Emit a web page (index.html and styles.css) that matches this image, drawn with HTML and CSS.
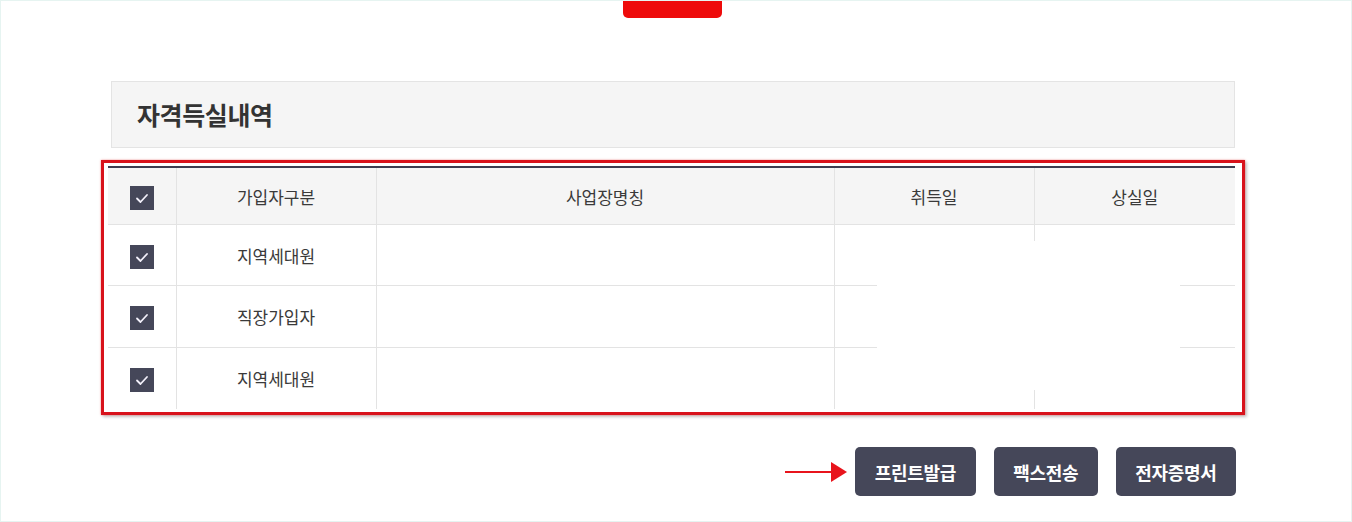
FILE: index.html
```html
<!DOCTYPE html>
<html lang="ko">
<head>
<meta charset="utf-8">
<title>자격득실내역</title>
<link rel="stylesheet" href="styles.css">
</head>
<body>
<div class="frame">
  <div class="tab"></div>
  <div class="content">
    <div class="title-box"><h2 class="title">자격득실내역</h2></div>
    <div class="highlight">
      <table class="grid">
        <colgroup>
          <col class="c-chk"><col class="c-type"><col class="c-name"><col class="c-date"><col class="c-date2">
        </colgroup>
        <thead>
          <tr>
            <th><span class="chk"><svg viewBox="0 0 24 24" width="24" height="24"><polyline points="7,12.5 10.5,16 17,9" fill="none" stroke="#f2f0fa" stroke-width="1.8" stroke-linecap="round" stroke-linejoin="round"/></svg></span></th>
            <th>가입자구분</th>
            <th>사업장명칭</th>
            <th>취득일</th>
            <th>상실일</th>
          </tr>
        </thead>
        <tbody>
          <tr>
            <td><span class="chk"><svg viewBox="0 0 24 24" width="24" height="24"><polyline points="7,12.5 10.5,16 17,9" fill="none" stroke="#f2f0fa" stroke-width="1.8" stroke-linecap="round" stroke-linejoin="round"/></svg></span></td>
            <td>지역세대원</td><td></td><td></td><td></td>
          </tr>
          <tr>
            <td><span class="chk"><svg viewBox="0 0 24 24" width="24" height="24"><polyline points="7,12.5 10.5,16 17,9" fill="none" stroke="#f2f0fa" stroke-width="1.8" stroke-linecap="round" stroke-linejoin="round"/></svg></span></td>
            <td>직장가입자</td><td></td><td></td><td></td>
          </tr>
          <tr>
            <td><span class="chk"><svg viewBox="0 0 24 24" width="24" height="24"><polyline points="7,12.5 10.5,16 17,9" fill="none" stroke="#f2f0fa" stroke-width="1.8" stroke-linecap="round" stroke-linejoin="round"/></svg></span></td>
            <td>지역세대원</td><td></td><td></td><td></td>
          </tr>
        </tbody>
      </table>
      <div class="mask"></div>
    </div>
    <div class="actions">
      <svg class="arrow" viewBox="0 0 64 24" width="64" height="24"><line x1="0" y1="12" x2="50" y2="12" stroke="#e8141c" stroke-width="2.2"/><polygon points="46,2 62,12 46,22" fill="#e8141c"/></svg>
      <button class="btn">프린트발급</button>
      <button class="btn">팩스전송</button>
      <button class="btn">전자증명서</button>
    </div>
  </div>
</div>
</body>
</html>
```

FILE: styles.css
```css
html, body {
  margin: 0;
  padding: 0;
  background: #ffffff;
}
body {
  font-family: "Noto Sans CJK KR", "Noto Sans", sans-serif;
  color: #333;
}
.frame {
  width: 1352px;
  height: 522px;
  box-sizing: border-box;
  border: 1px solid #e6f4f1;
  overflow: hidden;
}
.tab {
  width: 99px;
  height: 18px;
  margin-left: 622px;
  margin-top: -1px;
  background: #ee0b0b;
  border-radius: 0 0 5px 5px;
}
.content {
  margin-left: 110px;
  width: 1125px;
}
.title-box {
  margin-top: 63px;
  height: 67px;
  box-sizing: border-box;
  margin-right: 1px;
  background: #f5f5f5;
  border: 1px solid #e4e4e4;
  display: flex;
  align-items: center;
  padding-left: 25px;
}
.title {
  margin: 0 0 2px 0;
  font-size: 25px;
  font-weight: 700;
  color: #333;
  letter-spacing: -0.4px;
}
.highlight {
  position: relative;
  margin: 12px -9px 0 -10px;
  border: 3px solid #d8121b;
  box-shadow: 0 0 2px rgba(230, 40, 40, 0.5), 2px 2px 3px rgba(0, 0, 0, 0.22);
  padding: 3px 7px 3px 4px;
}
.grid {
  width: 100%;
  border-collapse: collapse;
  table-layout: fixed;
  border-top: 2px solid #3c3d50;
}
.c-chk { width: 68px; }
.c-type { width: 200px; }
.c-name { width: 458px; }
.c-date { width: 200px; }
.c-date2 { width: auto; }
.grid th,
.grid td {
  padding: 0;
  text-align: center;
  vertical-align: middle;
  font-size: 17px;
  color: #3a3a3a;
  border-left: 1px solid #e3e3e3;
  border-bottom: 1px solid #e3e3e3;
}
.grid th:first-child,
.grid td:first-child {
  border-left: none;
}
.grid th {
  height: 56px;
  background: #f5f5f5;
  font-weight: 400;
}
.grid td {
  height: 60px;
  background: #fff;
}
.grid tbody tr:nth-child(2) td {
  height: 61px;
}
.grid tbody tr:last-child td {
  border-bottom: none;
  height: 61px;
}
.chk {
  display: inline-block;
  width: 24px;
  height: 24px;
  background: #454759;
  vertical-align: middle;
}
.chk svg {
  display: block;
}
.mask {
  position: absolute;
  left: 773px;
  top: 78px;
  width: 303px;
  height: 149px;
  background: #fff;
}
.actions {
  margin-top: 32px;
  display: flex;
  justify-content: flex-end;
  align-items: center;
  gap: 18px;
}
.arrow {
  margin-right: -12px;
  display: block;
}
.btn {
  height: 49px;
  padding: 0 19.5px;
  border: none;
  border-radius: 5px;
  background: #454759;
  color: #fff;
  font-family: "Noto Sans CJK KR", "Noto Sans", sans-serif;
  font-size: 18px;
  font-weight: 700;
  letter-spacing: -0.3px;
}
```
